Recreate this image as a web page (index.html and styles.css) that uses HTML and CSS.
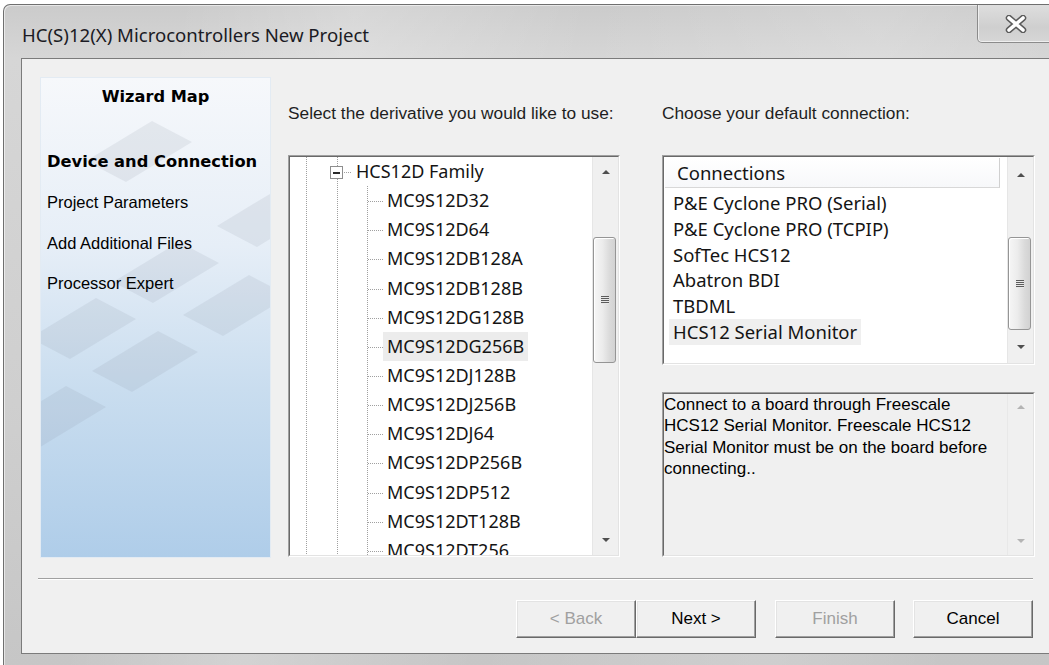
FILE: index.html
```html
<!DOCTYPE html>
<html lang="en">
<head>
<meta charset="utf-8">
<title>HC(S)12(X) Microcontrollers New Project</title>
<link rel="stylesheet" href="styles.css">
</head>
<body>
<div class="window">
  <div class="titlebar">
    <span class="title">HC(S)12(X) Microcontrollers New Project</span>
    <div class="close-btn">
      <svg width="24" height="18" viewBox="0 0 24 18">
        <path d="M5 3 L19 15 M19 3 L5 15" stroke="#5a5a5a" stroke-width="6.5" stroke-linecap="round"/>
        <path d="M5 3 L19 15 M19 3 L5 15" stroke="#ffffff" stroke-width="3.6" stroke-linecap="round"/>
      </svg>
    </div>
  </div>

  <div class="client">
    <div class="main">
      <aside class="wizard-map">
        <svg class="wizard-art" width="231" height="481" viewBox="0 0 231 481">
          <g fill="rgba(120,132,152,0.12)">
            <polygon points="112,44 152,65 86,105 46,84"/>
            <polygon points="243,109 283,130 217,170 177,149"/>
            <polygon points="139,165 179,186 113,226 73,205"/>
            <polygon points="56,221 96,242 30,282 -10,261"/>
            <polygon points="118,254 158,275 92,315 52,294"/>
            <polygon points="26,309 66,330 0,370 -40,349"/>
            <polygon points="209,198 249,219 183,259 143,238"/>
          </g>
        </svg>
        <h2 class="wizard-title">Wizard Map</h2>
        <ul class="wizard-steps">
          <li class="current">Device and Connection</li>
          <li>Project Parameters</li>
          <li>Add Additional Files</li>
          <li>Processor Expert</li>
        </ul>
      </aside>

      <section class="col col-derivative">
        <p class="label">Select the derivative you would like to use:</p>
        <div class="sunken tree-box">
          <div class="inner">
            <div class="tree">
              <div class="row node">
                <span class="expander"><span class="minus"></span></span>
                <span class="dots short"></span>
                <span class="item">HCS12D Family</span>
              </div>
              <div class="children">
                <div class="row child"><span class="dots"></span><span class="item">MC9S12D32</span></div>
                <div class="row child"><span class="dots"></span><span class="item">MC9S12D64</span></div>
                <div class="row child"><span class="dots"></span><span class="item">MC9S12DB128A</span></div>
                <div class="row child"><span class="dots"></span><span class="item">MC9S12DB128B</span></div>
                <div class="row child"><span class="dots"></span><span class="item">MC9S12DG128B</span></div>
                <div class="row child"><span class="dots"></span><span class="item selected">MC9S12DG256B</span></div>
                <div class="row child"><span class="dots"></span><span class="item">MC9S12DJ128B</span></div>
                <div class="row child"><span class="dots"></span><span class="item">MC9S12DJ256B</span></div>
                <div class="row child"><span class="dots"></span><span class="item">MC9S12DJ64</span></div>
                <div class="row child"><span class="dots"></span><span class="item">MC9S12DP256B</span></div>
                <div class="row child"><span class="dots"></span><span class="item">MC9S12DP512</span></div>
                <div class="row child"><span class="dots"></span><span class="item">MC9S12DT128B</span></div>
                <div class="row child"><span class="dots"></span><span class="item">MC9S12DT256</span></div>
              </div>
            </div>
            <div class="vscroll sb-tree">
              <div class="sb-btn up"><span class="arrow-up"></span></div>
              <div class="sb-track"><div class="thumb"><span class="grip"></span></div></div>
              <div class="sb-btn down"><span class="arrow-down"></span></div>
            </div>
          </div>
        </div>
      </section>

      <section class="col col-connection">
        <p class="label">Choose your default connection:</p>
        <div class="sunken conn-box">
          <div class="inner">
            <div class="list">
              <div class="list-header"><span>Connections</span></div>
              <ul class="conn-items">
                <li><span class="item">P&amp;E Cyclone PRO (Serial)</span></li>
                <li><span class="item">P&amp;E Cyclone PRO (TCPIP)</span></li>
                <li><span class="item">SofTec HCS12</span></li>
                <li><span class="item">Abatron BDI</span></li>
                <li><span class="item">TBDML</span></li>
                <li><span class="item selected">HCS12 Serial Monitor</span></li>
              </ul>
            </div>
            <div class="vscroll sb-conn">
              <div class="sb-btn up"><span class="arrow-up"></span></div>
              <div class="sb-track"><div class="thumb"><span class="grip"></span></div></div>
              <div class="sb-btn down"><span class="arrow-down"></span></div>
            </div>
          </div>
        </div>
        <div class="sunken desc-box">
          <div class="inner">
            <p class="desc">Connect to a board through Freescale<br>HCS12 Serial Monitor. Freescale HCS12<br>Serial Monitor must be on the board before<br>connecting..</p>
            <div class="vscroll sb-desc disabled">
              <div class="sb-btn up"><span class="arrow-up"></span></div>
              <div class="sb-track"></div>
              <div class="sb-btn down"><span class="arrow-down"></span></div>
            </div>
          </div>
        </div>
      </section>
    </div>

    <div class="separator"></div>

    <div class="buttons">
      <button class="btn disabled btn-back">&lt; Back</button>
      <button class="btn btn-next">Next &gt;</button>
      <button class="btn disabled btn-finish">Finish</button>
      <button class="btn btn-cancel">Cancel</button>
    </div>
  </div>
</div>
</body>
</html>
```

FILE: styles.css
```css
* { box-sizing: border-box; }

html, body {
  margin: 0;
  padding: 0;
}

body {
  width: 1049px;
  height: 665px;
  overflow: hidden;
  background: #ffffff;
  font-family: "Liberation Sans", Arial, sans-serif;
}

/* ---------- window frame ---------- */
.window {
  margin: 4px 0 0 3px;
  width: 1060px;
  height: 662px;
  border: 1px solid #6f6f6f;
  border-bottom: none;
  border-radius: 7px 7px 0 0;
  background:
    linear-gradient(100deg, rgba(255,255,255,0) 15%, rgba(255,255,255,0.22) 30%, rgba(255,255,255,0) 50%, rgba(255,255,255,0.15) 75%, rgba(255,255,255,0) 90%),
    linear-gradient(to bottom, #cbcbcb 0%, #d6d6d6 8%, #cfcfcf 60%, #c6c6c6 100%);
  box-shadow: inset 1px 1px 0 rgba(255,255,255,0.55);
  display: flex;
  flex-direction: column;
}

.titlebar {
  height: 53px;
  flex: none;
  display: flex;
  align-items: center;
  padding: 6px 9px 0 18px;
}

.title {
  font-family: "Noto Sans", "Open Sans", sans-serif;
  font-size: 18.6px;
  color: #1b1b24;
  white-space: nowrap;
}

.close-btn {
  margin-left: auto;
  margin-top: -6px;
  align-self: flex-start;
  width: 76px;
  height: 38px;
  border: 1px solid #8b8b8b;
  border-top: none;
  border-radius: 0 0 5px 5px;
  background: linear-gradient(to bottom, #dedede, #cfcfcf 60%, #d6d6d6);
  box-shadow: inset 1px 0 0 rgba(255,255,255,0.6), inset 0 -1px 0 rgba(255,255,255,0.6);
  display: flex;
  align-items: center;
  justify-content: center;
  padding-left: 2px;
}

/* ---------- client area ---------- */
.client {
  margin-left: 17px;
  width: 1030px;
  height: 596px;
  flex: none;
  border: 1px solid #7b7b7b;
  background: #f0f0f0;
  padding: 18px 0 0 18px;
  overflow: hidden;
}

.main {
  display: flex;
  height: 481px;
}

/* ---------- wizard map ---------- */
.wizard-map {
  position: relative;
  width: 231px;
  height: 481px;
  flex: none;
  border: 1px solid #e3ebf3;
  background: linear-gradient(to bottom, #f6f8fb 0%, #e6eef7 35%, #c9ddef 65%, #afcde9 100%);
  overflow: hidden;
}

.wizard-art {
  position: absolute;
  left: -1px;
  top: -1px;
}

.wizard-title {
  position: relative;
  margin: 9px 0 0;
  font-family: "DejaVu Sans", sans-serif;
  font-weight: bold;
  font-size: 16.2px;
  line-height: 20px;
  text-align: center;
  color: #000;
}

.wizard-steps {
  position: relative;
  list-style: none;
  margin: 45px 0 0;
  padding: 0 0 0 6px;
}

.wizard-steps li {
  height: 40.4px;
  line-height: 20px;
  font-size: 16.5px;
  color: #000;
  white-space: nowrap;
}

.wizard-steps li.current {
  font-family: "DejaVu Sans", sans-serif;
  font-weight: bold;
  font-size: 16.3px;
}

/* ---------- columns ---------- */
.col {
  display: flex;
  flex-direction: column;
  flex: none;
}

.col-derivative {
  width: 332px;
  margin-left: 17px;
}

.col-connection {
  width: 373px;
  margin-left: 42px;
}

.label {
  margin: 26px 0 0 0;
  height: 20px;
  line-height: 20px;
  font-size: 17.3px;
  color: #1e1e1e;
  white-space: nowrap;
}

/* sunken 3D boxes */
.sunken {
  border: 1px solid;
  border-color: #a0a0a0 #ffffff #ffffff #a0a0a0;
  flex: none;
}

.sunken > .inner {
  height: 100%;
  border: 1px solid;
  border-color: #696969 #e3e3e3 #e3e3e3 #696969;
  display: flex;
  overflow: hidden;
}

/* ---------- tree ---------- */
.tree-box {
  margin-top: 32px;
  height: 402px;
}

.tree {
  flex: 1;
  background-color: #ffffff;
  background-image:
    linear-gradient(to bottom, #a0a0a0 50%, transparent 50%),
    linear-gradient(to bottom, #a0a0a0 50%, transparent 50%);
  background-size: 1px 2px, 1px 2px;
  background-repeat: repeat-y, repeat-y;
  background-position: 16px 0, 47px 0;
  font-family: "Noto Sans", "Open Sans", sans-serif;
  font-size: 18px;
  color: #141414;
  overflow: hidden;
}

.children {
  background-image: linear-gradient(to bottom, #a0a0a0 50%, transparent 50%);
  background-size: 1px 2px;
  background-repeat: repeat-y;
  background-position: 77px 0;
}

.row {
  height: 29.15px;
  display: flex;
  align-items: center;
  white-space: nowrap;
}

.row.node {
  padding-left: 40px;
}

.row.child {
  padding-left: 78px;
}

.expander {
  width: 13px;
  height: 13px;
  margin-top: 2px;
  border: 1px solid #8e8e8e;
  background: #ffffff;
  display: flex;
  align-items: center;
  justify-content: center;
  flex: none;
}

.minus {
  width: 7px;
  height: 2px;
  background: #2a2a2a;
}

.dots {
  height: 1px;
  width: 15px;
  flex: none;
  background-image: linear-gradient(to right, #a0a0a0 50%, transparent 50%);
  background-size: 2px 1px;
  background-repeat: repeat-x;
  margin-top: 2px;
}

.dots.short {
  width: 8px;
  margin-left: 1px;
}

.item {
  padding: 0 4px;
  line-height: 29px;
}

.item.selected {
  background: #ececec;
}

/* ---------- scrollbars ---------- */
.vscroll {
  width: 26px;
  flex: none;
  display: flex;
  flex-direction: column;
  background: #f0f0f0;
  border-left: 1px solid #e6e6e6;
}

.sb-btn {
  flex: none;
  display: flex;
  align-items: center;
  justify-content: center;
}

.arrow-up {
  width: 0;
  height: 0;
  border-left: 4px solid transparent;
  border-right: 4px solid transparent;
  border-bottom: 4px solid #4f4f4f;
}

.arrow-down {
  width: 0;
  height: 0;
  border-left: 4px solid transparent;
  border-right: 4px solid transparent;
  border-top: 4px solid #4f4f4f;
}

.vscroll.disabled .arrow-up { border-bottom-color: #b4b4b4; }
.vscroll.disabled .arrow-down { border-top-color: #b4b4b4; }

.sb-track {
  flex: 1;
}

.thumb {
  width: 23px;
  border: 1px solid #959595;
  border-radius: 3px;
  background: linear-gradient(to right, #f6f6f6 0%, #ececec 40%, #dadada 75%, #d2d2d2 100%);
  box-shadow: inset 1px 1px 0 #ffffff;
  display: flex;
  align-items: center;
  justify-content: center;
}

.grip {
  width: 8px;
  height: 8px;
  background: repeating-linear-gradient(to bottom, #5c5c5c 0, #5c5c5c 1px, #e8e8e8 1px, #e8e8e8 2px);
}

.sb-tree .up { height: 30px; }
.sb-tree .down { height: 30px; }
.sb-tree .thumb { margin-top: 50px; height: 126px; }

.sb-conn .up { height: 36px; }
.sb-conn .down { height: 32px; }
.sb-conn .thumb { margin-top: 44px; height: 93px; }

.sb-desc .up { height: 26px; }
.sb-desc .down { height: 28px; }

/* ---------- connections list ---------- */
.conn-box {
  margin-top: 32px;
  height: 210px;
}

.list {
  flex: 1;
  background: #ffffff;
  font-family: "Noto Sans", "Open Sans", sans-serif;
  font-size: 18.5px;
  color: #141414;
  overflow: hidden;
}

.list-header {
  margin: 1px 0 0 1px;
  width: 335px;
  height: 30px;
  line-height: 29px;
  padding-left: 12px;
  background: linear-gradient(to bottom, #ffffff, #f7f8fa);
  border-bottom: 1px solid #d8d8d8;
  border-right: 1px solid #d0d0d0;
  white-space: nowrap;
}

.conn-items {
  list-style: none;
  margin: 2px 0 0 0;
  padding: 0 0 0 5px;
}

.conn-items li {
  height: 25.8px;
  white-space: nowrap;
}

.conn-items .item {
  display: inline-block;
  line-height: 26px;
  height: 26px;
}

.conn-items .item.selected {
  background: #efefef;
}

/* ---------- description ---------- */
.desc-box {
  margin-top: 27px;
  height: 165px;
  background: #f0f0f0;
}

.desc {
  flex: 1;
  margin: 0;
  padding: 0;
  font-size: 17px;
  line-height: 21.3px;
  color: #000;
  white-space: nowrap;
  overflow: hidden;
}

.desc-box .vscroll {
  border-left: 1px solid #e8e8e8;
}

/* ---------- footer ---------- */
.separator {
  margin: 20px 0 0 -2px;
  width: 995px;
  height: 2px;
  border-top: 1px solid #a0a0a0;
  border-bottom: 1px solid #ffffff;
}

.buttons {
  margin: 20px 0 0 -2px;
  width: 995px;
  display: flex;
  justify-content: flex-end;
}

.btn {
  width: 120px;
  height: 38px;
  margin: 0;
  padding: 0;
  font-family: "Liberation Sans", Arial, sans-serif;
  font-size: 17px;
  color: #000;
  background: #f0f0f0;
  border: 1px solid;
  border-color: #ffffff #696969 #696969 #ffffff;
  box-shadow: inset -1px -1px 0 #a0a0a0, inset 1px 1px 0 #e3e3e3;
}

.btn.disabled {
  color: #a0a0a0;
}

.btn-finish { margin-left: 19px; }
.btn-cancel { margin-left: 18px; }
```
